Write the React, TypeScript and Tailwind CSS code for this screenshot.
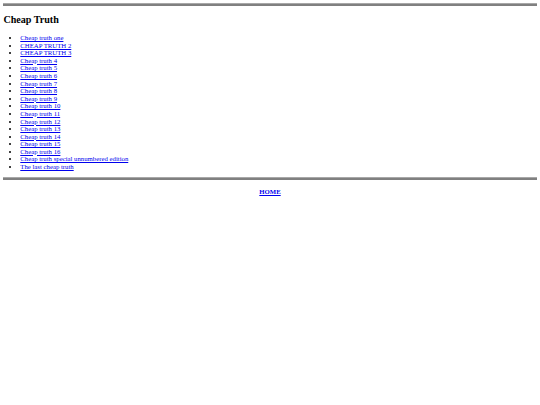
import React from 'react';

const issues = [
  'Cheap truth one',
  'CHEAP TRUTH 2',
  'CHEAP TRUTH 3',
  'Cheap truth 4',
  'Cheap truth 5',
  'Cheap truth 6',
  'Cheap truth 7',
  'Cheap truth 8',
  'Cheap truth 9',
  'Cheap truth 10',
  'Cheap truth 11',
  'Cheap truth 12',
  'Cheap truth 13',
  'Cheap truth 14',
  'Cheap truth 15',
  'Cheap truth 16',
  'Cheap truth special unnumbered edition',
  'The last cheap truth',
];

// old-school rule: grey bar with a lighter edge
const Rule = ({ className }: { className?: string }) => (
  <div className={`h-[3px] border-t border-[#a8a8a8] bg-[#808080] ${className ?? ''}`} />
);

export default function App() {
  return (
    <div className="min-h-screen bg-white px-[3.4px] pt-[3.4px] font-['Liberation_Serif','Times_New_Roman',serif] text-[6.75px] text-black">
      <Rule />
      <h2 className="mt-[7.6px] text-[10.1px] font-bold leading-[11.6px]">Cheap Truth</h2>
      <ul className="mt-[8.4px] list-disc pl-[16.9px] leading-[7.6px]">
        {issues.map((title) => (
          <li key={title}>
            <a href="#" className="text-[#0000ee] underline">
              {title}
            </a>
          </li>
        ))}
      </ul>
      <Rule className="mt-[6.75px]" />
      <p className="mt-[6.75px] text-center font-bold">
        <a href="#" className="text-[#0000ee] underline">
          HOME
        </a>
      </p>
    </div>
  );
}
